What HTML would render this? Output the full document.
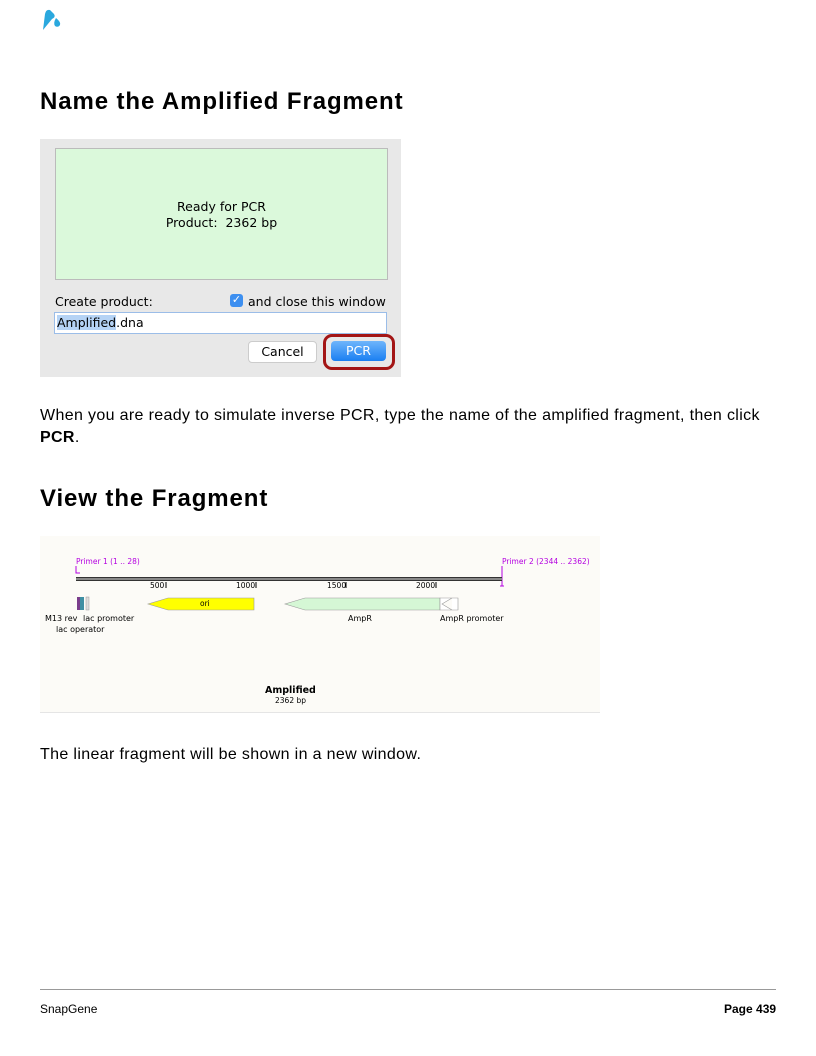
<!DOCTYPE html>
<html><head><meta charset="utf-8"><style>
body{margin:0;width:816px;height:1056px;background:#fff;position:relative;font-family:"Liberation Sans",sans-serif;color:#000;overflow:hidden}
.a{position:absolute;white-space:nowrap}
h2{position:absolute;margin:0;font-size:24px;font-weight:bold;left:40px;letter-spacing:0.9px}
.p{position:absolute;left:40px;font-size:16px;line-height:22px;letter-spacing:0.35px}
.m{font-family:"DejaVu Sans",sans-serif}
</style></head><body>
<svg class="a" style="left:40px;top:6px" width="26" height="26" viewBox="0 0 26 26"><path d="M3 24 L5 8 Q6 3 10 4 L14 8 Q16 11 12 13 Z" fill="#2aa8de"/><path d="M16 12 Q21 16 20 19 Q18 22 15 20 Q13 17 16 12Z" fill="#2aa8de"/></svg>
<h2 style="top:88px">Name the Amplified Fragment</h2>
<div class="a" style="left:40px;top:139px;width:361px;height:238px;background:#e8e8e8"></div>
<div class="a" style="left:55px;top:148px;width:331px;height:130px;background:#dbf9db;border:1px solid #bbb"></div>
<div class="a m" style="left:55px;top:199px;width:333px;text-align:center;font-size:12.5px;line-height:16px">Ready for PCR<br>Product:&nbsp; 2362 bp</div>
<div class="a m" style="left:55px;top:294px;font-size:12.5px">Create product:</div>
<div class="a" style="left:230px;top:294px;width:13px;height:13px;background:#3d8ff0;border-radius:3px;color:#fff;font-size:11px;text-align:center;line-height:13px">✓</div>
<div class="a m" style="left:248px;top:294px;font-size:12.5px">and close this window</div>
<div class="a" style="left:54px;top:312px;width:331px;height:20px;background:#fff;border:1px solid #9bbde8"></div>
<div class="a m" style="left:57px;top:315px;font-size:12.5px"><span style="background:#b5d3f5">Amplified</span>.dna</div>
<div class="a m" style="left:248px;top:341px;width:67px;height:20px;background:#fff;border:1px solid #ccc;border-radius:4px;text-align:center;line-height:20px;font-size:12.5px">Cancel</div>
<div class="a" style="left:323px;top:334px;width:66px;height:30px;border:3px solid #a31515;border-radius:9px"></div>
<div class="a m" style="left:331px;top:341px;width:55px;height:20px;background:linear-gradient(#6fb5fb,#1a7ff2);border-radius:4px;color:#fff;text-align:center;line-height:20px;font-size:12.5px">PCR</div>
<div class="p" style="top:405px">When you are ready to simulate inverse PCR, type the name of the amplified fragment, then click<br><b>PCR</b>.</div>
<h2 style="top:485px">View the Fragment</h2>
<div class="a" style="left:40px;top:536px;width:560px;height:176px;background:#fcfbf7;border-bottom:1px solid #e5e5e5"></div>
<svg class="a" style="left:40px;top:536px" width="560" height="180" font-family="DejaVu Sans,sans-serif">
<text x="36" y="28" font-size="7.5" fill="#b400e0">Primer 1  (1 .. 28)</text>
<text x="462" y="28" font-size="7.5" fill="#b400e0">Primer 2  (2344 .. 2362)</text>
<path d="M36 30 V37 H40 M462 30 V50 M460 50 H464" stroke="#b400e0" fill="none"/>
<rect x="36" y="41" width="426" height="4" fill="#333"/><rect x="36" y="42.5" width="426" height="1" fill="#ddd"/>
<g font-size="7.5" fill="#000"><text x="110" y="52">500</text><text x="196" y="52">1000</text><text x="287" y="52">1500</text><text x="376" y="52">2000</text></g>
<path d="M126 46V52M216 46V52M306 46V52M396 46V52" stroke="#000"/>
<path d="M214 62H128L108 68L128 74H214Z" fill="#ff0" stroke="#999" stroke-width=".6"/>
<text x="160" y="70" font-size="7.5">ori</text>
<path d="M400 62H265L245 68L265 74H400Z" fill="#d5f7d5" stroke="#999" stroke-width=".6"/>
<path d="M400 62H418V74H400ZM412 62L402 68L412 74" fill="#fff" stroke="#999" stroke-width=".6"/>
<rect x="37" y="61" width="3" height="13" fill="#7a3d8c"/><rect x="40" y="61" width="4" height="13" fill="#3f8fa3"/><rect x="46" y="61" width="3" height="13" fill="#ddd" stroke="#999" stroke-width=".5"/>
<g font-size="8"><text x="5" y="85">M13 rev</text><text x="43" y="85">lac promoter</text><text x="16" y="96">lac operator</text><text x="308" y="85">AmpR</text><text x="400" y="85">AmpR promoter</text></g>
<text x="225" y="157" font-size="9.5" font-weight="bold">Amplified</text>
<text x="235" y="167" font-size="7.5">2362 bp</text>
</svg>
<div class="p" style="top:744px">The linear fragment will be shown in a new window.</div>
<div class="a" style="left:40px;top:989px;width:736px;height:1px;background:#999"></div>
<div class="a" style="left:40px;top:1002px;font-size:12px">SnapGene</div>
<div class="a" style="left:724px;top:1002px;font-size:12px;font-weight:bold">Page 439</div>
</body></html>
